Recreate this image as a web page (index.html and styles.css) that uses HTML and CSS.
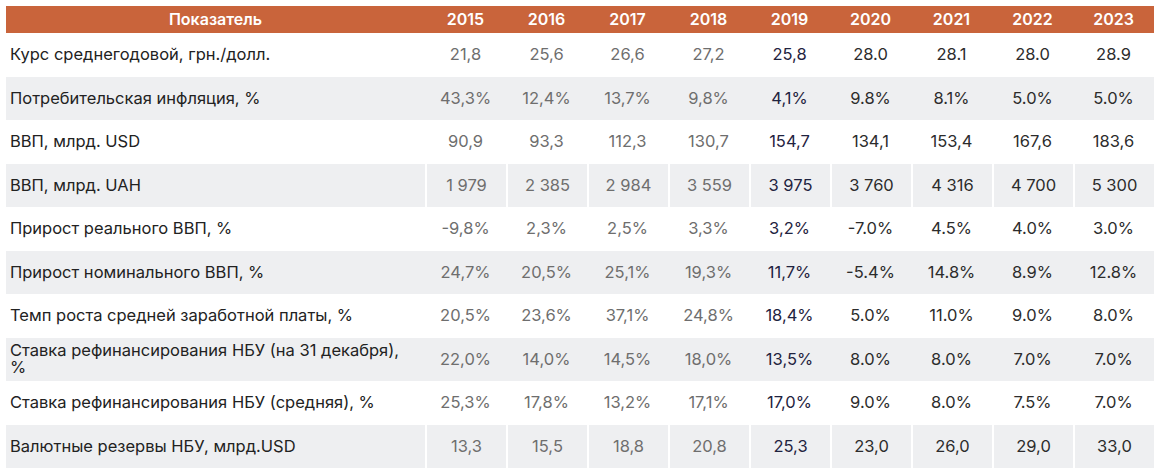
FILE: index.html
```html
<!DOCTYPE html>
<html lang="ru">
<head>
<meta charset="utf-8">
<link rel="stylesheet" href="styles.css">
</head>
<body>
<div class="table">
  <div class="row head">
    <div class="cell label">Показатель</div>
    <div class="cell">2015</div><div class="cell">2016</div><div class="cell">2017</div><div class="cell">2018</div><div class="cell">2019</div><div class="cell">2020</div><div class="cell">2021</div><div class="cell">2022</div><div class="cell">2023</div>
  </div>
  <div class="row">
    <div class="cell label">Курс среднегодовой, грн./долл.</div>
    <div class="cell old">21,8</div><div class="cell old">25,6</div><div class="cell old">26,6</div><div class="cell old">27,2</div><div class="cell cur">25,8</div><div class="cell fc">28.0</div><div class="cell fc">28.1</div><div class="cell fc">28.0</div><div class="cell fc">28.9</div>
  </div>
  <div class="row gray">
    <div class="cell label">Потребительская инфляция, %</div>
    <div class="cell old">43,3%</div><div class="cell old">12,4%</div><div class="cell old">13,7%</div><div class="cell old">9,8%</div><div class="cell cur">4,1%</div><div class="cell fc">9.8%</div><div class="cell fc">8.1%</div><div class="cell fc">5.0%</div><div class="cell fc">5.0%</div>
  </div>
  <div class="row">
    <div class="cell label">ВВП, млрд. USD</div>
    <div class="cell old">90,9</div><div class="cell old">93,3</div><div class="cell old">112,3</div><div class="cell old">130,7</div><div class="cell cur">154,7</div><div class="cell fc">134,1</div><div class="cell fc">153,4</div><div class="cell fc">167,6</div><div class="cell fc">183,6</div>
  </div>
  <div class="row gray split">
    <div class="cell label">ВВП, млрд. UAH</div>
    <div class="cell old">1 979</div><div class="cell old">2 385</div><div class="cell old">2 984</div><div class="cell old">3 559</div><div class="cell cur">3 975</div><div class="cell fc">3 760</div><div class="cell fc">4 316</div><div class="cell fc">4 700</div><div class="cell fc">5 300</div>
  </div>
  <div class="row">
    <div class="cell label">Прирост реального ВВП, %</div>
    <div class="cell old">-9,8%</div><div class="cell old">2,3%</div><div class="cell old">2,5%</div><div class="cell old">3,3%</div><div class="cell cur">3,2%</div><div class="cell fc">-7.0%</div><div class="cell fc">4.5%</div><div class="cell fc">4.0%</div><div class="cell fc">3.0%</div>
  </div>
  <div class="row gray">
    <div class="cell label">Прирост номинального ВВП, %</div>
    <div class="cell old">24,7%</div><div class="cell old">20,5%</div><div class="cell old">25,1%</div><div class="cell old">19,3%</div><div class="cell cur">11,7%</div><div class="cell fc">-5.4%</div><div class="cell fc">14.8%</div><div class="cell fc">8.9%</div><div class="cell fc">12.8%</div>
  </div>
  <div class="row">
    <div class="cell label">Темп роста средней заработной платы, %</div>
    <div class="cell old">20,5%</div><div class="cell old">23,6%</div><div class="cell old">37,1%</div><div class="cell old">24,8%</div><div class="cell cur">18,4%</div><div class="cell fc">5.0%</div><div class="cell fc">11.0%</div><div class="cell fc">9.0%</div><div class="cell fc">8.0%</div>
  </div>
  <div class="row gray">
    <div class="cell label">Ставка рефинансирования НБУ (на 31 декабря), %</div>
    <div class="cell old">22,0%</div><div class="cell old">14,0%</div><div class="cell old">14,5%</div><div class="cell old">18,0%</div><div class="cell cur">13,5%</div><div class="cell fc">8.0%</div><div class="cell fc">8.0%</div><div class="cell fc">7.0%</div><div class="cell fc">7.0%</div>
  </div>
  <div class="row">
    <div class="cell label">Ставка рефинансирования НБУ (средняя), %</div>
    <div class="cell old">25,3%</div><div class="cell old">17,8%</div><div class="cell old">13,2%</div><div class="cell old">17,1%</div><div class="cell cur">17,0%</div><div class="cell fc">9.0%</div><div class="cell fc">8.0%</div><div class="cell fc">7.5%</div><div class="cell fc">7.0%</div>
  </div>
  <div class="row gray split">
    <div class="cell label">Валютные резервы НБУ, млрд.USD</div>
    <div class="cell old">13,3</div><div class="cell old">15,5</div><div class="cell old">18,8</div><div class="cell old">20,8</div><div class="cell cur">25,3</div><div class="cell fc">23,0</div><div class="cell fc">26,0</div><div class="cell fc">29,0</div><div class="cell fc">33,0</div>
  </div>
</div>
</body>
</html>
```

FILE: styles.css
```css
html, body {
  margin: 0;
  padding: 0;
  background: #ffffff;
}
body {
  padding: 6px;
  font-family: "Inter", "Noto Sans", sans-serif;
}
.table {
  width: 1148px;
  display: flex;
  flex-direction: column;
}
.row {
  display: grid;
  grid-template-columns: 419px repeat(9, 81px);
  height: 43.5px;
}
.row.head {
  height: 27px;
  background: #c9643b;
  color: #ffffff;
  font-weight: 600;
}
.row.gray {
  background: #eeeff1;
}
.row.split .cell + .cell {
  border-left: 2px solid #ffffff;
}
.cell {
  display: flex;
  align-items: center;
  justify-content: center;
  font-size: 16.5px;
  line-height: 17px;
}
.head .cell {
  font-size: 16px;
}
.cell.label {
  justify-content: flex-start;
  padding: 0 6px 0 4px;
  color: #222222;
}
.head .cell.label {
  justify-content: center;
  padding: 0;
  color: #ffffff;
}
.cell.old { color: #6e6e6e; }
.cell.cur { color: #1f2340; }
.cell.fc { color: #2c2c2c; }
```
